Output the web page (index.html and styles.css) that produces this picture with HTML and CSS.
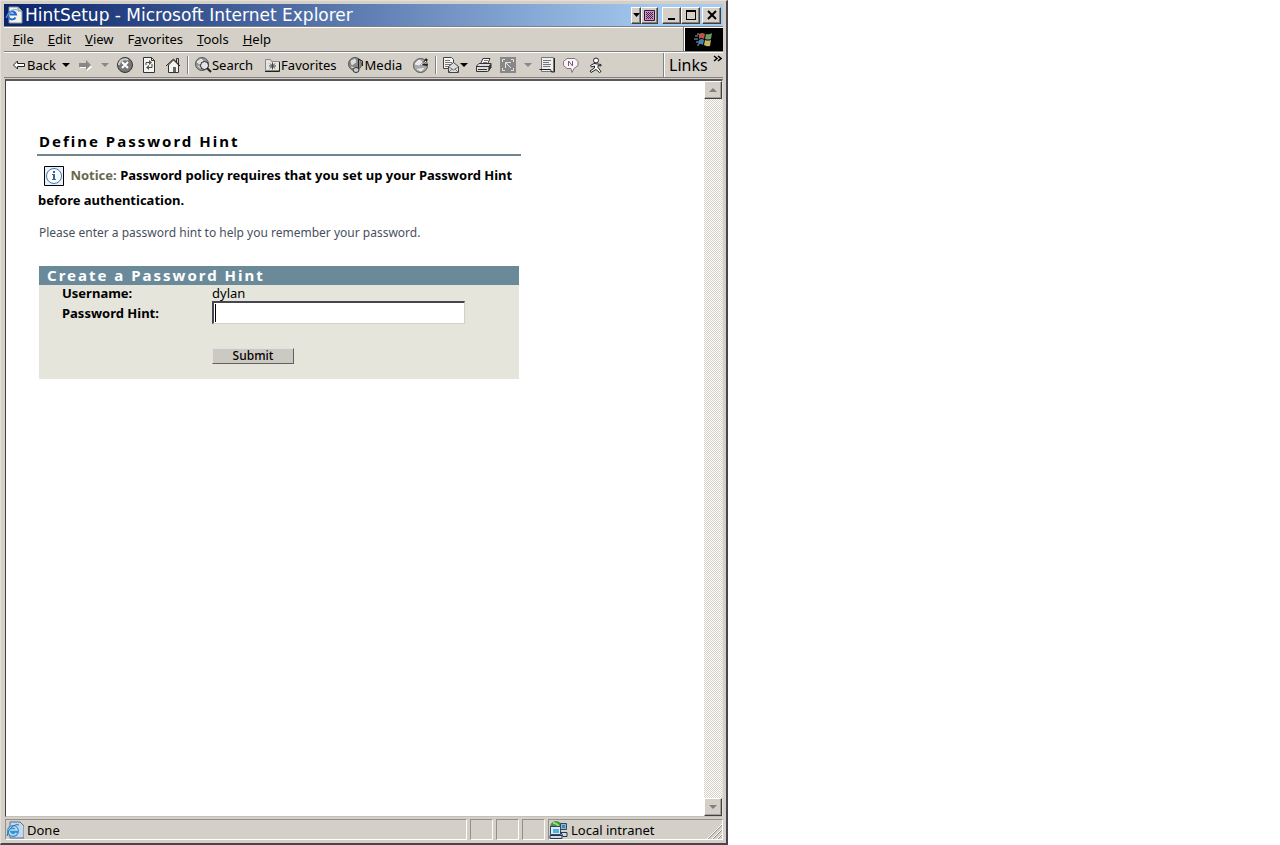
FILE: index.html
```html
<!DOCTYPE html>
<html lang="en">
<head>
  <meta charset="UTF-8">
  <title>HintSetup</title>
  <link rel="stylesheet" href="styles.css">
</head>
<body>

<div class="window">

  <header class="titlebar">
    <svg class="icon" width="18" height="18" viewBox="0 0 18 18">
      <path d="M4 1h9l4 4v12H4z" fill="#f4f4ec" stroke="#8a8f98"/>
      <path d="M13 1v4h4" fill="#d0d0c8" stroke="#8a8f98"/>
      <path d="M10.500 11.500A4 4 0 1 1 11 8.500H5" fill="none" stroke="#2468d0" stroke-width="2"/>
      <path d="M1 12C3 6 9 2 12 4" fill="none" stroke="#68a8f0"/>
    </svg>
    <h1 class="title">HintSetup - Microsoft Internet Explorer</h1>
    <button class="win-btn drop" aria-label="Options"><svg width="7" height="4"><path d="M0 0h7L3.500 4z"/></svg></button>
    <button class="win-btn theme" aria-label="Theme">
      <svg width="11" height="11" viewBox="0 0 11 11">
        <path d="M.5.5h10v10H.5z" fill="#d090c8" stroke="#301838"/>
        <path d="M2 2.500h1M4 2.500h1M6 2.500h1M8 2.500h1M3 3.500h1M5 3.500h1M7 3.500h1M2 4.500h1M4 4.500h1M6 4.500h1M8 4.500h1M3 5.500h1M5 5.500h1M7 5.500h1M2 6.500h1M4 6.500h1M6 6.500h1M8 6.500h1M3 7.500h1M5 7.500h1M7 7.500h1M2 8.500h1M4 8.500h1M6 8.500h1M8 8.500h1" stroke="#402048"/>
      </svg>
    </button>
    <button class="win-btn min" aria-label="Minimize"><svg width="12" height="12"><path d="M2 9h7v2H2z"/></svg></button>
    <button class="win-btn" aria-label="Maximize"><svg width="12" height="12"><path d="M1 1h10v10H1zM2 3v7h8V3z" fill-rule="evenodd"/></svg></button>
    <button class="win-btn close" aria-label="Close"><svg width="12" height="12"><path d="M2 2l8 8M10 2l-8 8" stroke="#000" stroke-width="2"/></svg></button>
  </header>

  <div class="menurow">
    <nav class="menu">
      <button><u>F</u>ile</button>
      <button><u>E</u>dit</button>
      <button><u>V</u>iew</button>
      <button>F<u>a</u>vorites</button>
      <button><u>T</u>ools</button>
      <button><u>H</u>elp</button>
    </nav>
    <div class="throbber">
      <svg width="20" height="18" viewBox="0 0 20 18">
        <path d="M1 5h3M0 8h4M2 11h3M3 3h2M3 14h2" stroke="#425866" stroke-width="2"/>
        <path d="M5 3q3-2 6 0l-1 5q-3-2-5 0z" fill="#b85840"/>
        <path d="M12 3q3 1 6-1l-1 6q-3 1-6 0z" fill="#6c9a68"/>
        <path d="M5 9q3-2 5 0l-1 5q-2-2-5 0z" fill="#4a80b0"/>
        <path d="M11 9q3 1 6 0l-1 6q-3 1-6-1z" fill="#c8b468"/>
      </svg>
    </div>
  </div>

  <div class="toolbar">
    <div class="tools">
      <button class="tool back">
        <svg width="15" height="16" viewBox="0 0 15 16"><path d="M1.500 8L5.500 4v2.500h7v3h-7V12z" fill="#fff" stroke="#222"/></svg>
        <span>Back</span>
      </button>
      <button class="caret" aria-label="Back list"><svg width="8" height="4"><path d="M0 0h8L4 4z"/></svg></button>
      <button class="tool" aria-label="Forward"><svg width="16" height="16"><path d="M2 8h7V5l5 5-5 4v-3H2z" fill="#fff"/><path d="M1 6h7V3l5 5-5 5v-3H1z" fill="#888"/></svg></button>
      <button class="caret off" aria-label="Forward list"><svg width="8" height="4"><path d="M0 0h8L4 4z"/></svg></button>
      <button class="tool" aria-label="Stop">
        <svg width="16" height="16"><circle cx="8" cy="8" r="7.500" fill="#777" stroke="#333"/><path d="M2 8a6 6 0 0 1 9-5" fill="none" stroke="#ccc" stroke-width="2"/><path d="M5 5l6 6M11 5l-6 6" stroke="#fff" stroke-width="2"/></svg>
      </button>
      <button class="tool" aria-label="Refresh">
        <svg width="16" height="16"><path d="M2.500.5h8l3 3v12h-11z" fill="#f4f4f0" stroke="#333"/><path d="M10.500.5v3h3" fill="none" stroke="#333"/><path d="M5 8V5.500h4M11 7v3.500H7" fill="none" stroke="#444"/><path d="M8 3l3 2.500L8 8zM8 8l-3 2.500L8 13z" fill="#555"/></svg>
      </button>
      <button class="tool" aria-label="Home">
        <svg width="16" height="16"><path d="M11.500 5V1.500h2V8" fill="#ccc" stroke="#333"/><path d="M3.500 8v7.500h10V8l-5-5z" fill="#f4f4f0" stroke="#333"/><path d="M1 9l7.500-7L15 9" fill="none" stroke="#222"/><path d="M8 10h3v5H8z" fill="#666"/></svg>
      </button>
      <span class="sep"></span>
      <button class="tool label">
        <svg width="17" height="16"><circle cx="7" cy="7" r="6.500" fill="#999" stroke="#555"/><path d="M2 5l4-3 2 2-3 3zM3 9l3 2" fill="#ddd" stroke="#eee"/><circle cx="9.500" cy="8.500" r="4" fill="#e4e4e4" stroke="#222"/><path d="M12 11l4 4" stroke="#222" stroke-width="2"/></svg>
        <span>Search</span>
      </button>
      <button class="tool label">
        <svg width="17" height="16"><path d="M1.500 13.500v-11h5l1 2h8v9z" fill="#e4e4e0" stroke="#888"/><path d="M1 14.500h14.500V5" fill="none" stroke="#222"/><path d="M5 9h7M8.500 5.500v7M6 6.500l5 5M11 6.500l-5 5" stroke="#444"/></svg>
        <span>Favorites</span>
      </button>
      <button class="tool label">
        <svg width="17" height="16"><circle cx="7" cy="7" r="6.500" fill="#888" stroke="#555"/><path d="M3 4l4-2 1 3-4 3zM3 10l4 1" fill="#ddd" stroke="#ddd"/><path d="M10.500 12V2l4 2v5" fill="none" stroke="#222"/><ellipse cx="8" cy="13" rx="3" ry="2.500" fill="#ccc" stroke="#333"/></svg>
        <span>Media</span>
      </button>
      <button class="tool" aria-label="History">
        <svg width="16" height="16"><circle cx="7.500" cy="8.500" r="7" fill="#aaa" stroke="#555"/><path d="M2 7l4-4 3 2-3 3zM4 12l4 2 3-3" fill="#e8e8e8" stroke="#eee"/><path d="M8 8l5-7 2 2-4 4h4l-1 2z" fill="#222"/><path d="M8 8l5-4" stroke="#fff"/></svg>
      </button>
      <span class="sep"></span>
      <button class="tool" aria-label="Mail">
        <svg width="25" height="16"><path d="M.5.5h8l2 2v9H.5z" fill="#f4f4f0" stroke="#444"/><path d="M2 3.500h5M2 5.500h7M2 7.500h6M2 9.500h4" stroke="#777"/><path d="M5.500 9.500l5-4 5 4v6h-10z" fill="#ddd" stroke="#444"/><path d="M6 10l4.500 3L15 10M6 15l3-3M15 15l-3-3" fill="none" stroke="#777"/><path d="M17 6h8l-4 4z"/></svg>
      </button>
      <button class="tool" aria-label="Print">
        <svg width="16" height="16"><path d="M4.500 7L7 1.500h7L11.500 7" fill="#fff" stroke="#333"/><path d="M8 3.500h4M7 5.500h4" stroke="#777"/><path d="M.5 9L3 6.500h12l-2 3v4l-1.500 1H.5z" fill="#ddd" stroke="#333"/><path d="M13 9.500l2.500-3v4l-3 4z" fill="#333"/><path d="M1 9.500h12M2 12.500h9" stroke="#333"/></svg>
      </button>
      <button class="tool" aria-label="Edit">
        <svg width="16" height="16"><path d="M0 0h16v16H0z" fill="#888"/><path d="M2.500 5V2.500H5M11 2.500h2.500V5M13.500 11v2.500H11M5 13.500H2.500V11M5.500 11V5.500H11M6 6l5 5" fill="none" stroke="#e4e4dc"/></svg>
      </button>
      <button class="caret off" aria-label="Edit list"><svg width="8" height="4"><path d="M0 0h8L4 4z"/></svg></button>
      <button class="tool" aria-label="Discuss">
        <svg width="16" height="16"><path d="M2.500.5h12v14h-12z" fill="#eee" stroke="#777"/><path d="M4 3.500h8M4 5.500h6M4 7.500h8M4 9.500h7" stroke="#777"/><path d="M.5 12.500h11l1 2.500h3V1" fill="none" stroke="#222"/></svg>
      </button>
      <button class="tool" aria-label="Messenger">
        <svg width="16" height="16"><path d="M4 1.500h8l3 3v4l-4 3-2 4-1-4H4l-3.500-3v-4z" fill="#f8f4f8" stroke="#907088"/><path d="M5.500 9V4l4 5V4" fill="none" stroke="#666"/></svg>
      </button>
      <button class="tool" aria-label="AIM">
        <svg width="16" height="16"><circle cx="9" cy="3.500" r="2.500" fill="#fff" stroke="#222"/><path d="M7 6.500L3.500 8.500l1 1.500 3-1v2l-4.500 3 1 1.500L9 12.500l3.500 3 1.500-1-3-4v-2l3 .5V7.500z" fill="#fff" stroke="#222"/></svg>
      </button>
    </div>
    <button class="links">Links
      <svg width="9" height="8"><path d="M1 1l3 2.500L1 6M5 1l3 2.500L5 6" fill="none" stroke="#000" stroke-width="1.500"/></svg>
    </button>
  </div>

  <div class="view">
    <main class="page">
      <h2 class="page-title">Define Password Hint</h2>
      <p class="notice">
        <svg class="info" width="20" height="20" viewBox="0 0 20 20">
          <path d="M.5.5h19v19H.5z" fill="#e8f0f8" stroke="#000"/>
          <circle cx="10" cy="10" r="7.500" fill="#fff" stroke="#3c78b4"/>
          <path d="M9 5h2v2H9zM8 8h3v5h1v1H8v-1h1V9H8z" fill="#2868a8"/>
        </svg>
        <span class="tag">Notice:</span> Password policy requires that you set up your Password Hint before authentication.
      </p>
      <p class="intro">Please enter a password hint to help you remember your password.</p>

      <form class="hint-form">
        <h3>Create a Password Hint</h3>
        <div class="fields">
          <span class="name">Username:</span>
          <span class="value">dylan</span>
          <label class="name" for="hint">Password Hint:</label>
          <input type="text" id="hint">
          <button type="submit">Submit</button>
        </div>
      </form>
    </main>
    <div class="scrollbar">
      <button aria-label="Scroll up"><svg width="8" height="4"><path d="M0 4h8L4 0z"/></svg></button>
      <button aria-label="Scroll down"><svg width="8" height="4"><path d="M0 0h8L4 4z"/></svg></button>
    </div>
  </div>

  <footer class="status">
    <div class="pane message">
      <svg width="18" height="18" viewBox="0 0 18 18">
        <path d="M4 1h10l4 4v12H4z" fill="#c4d8ec" stroke="#606c90"/>
        <circle cx="7" cy="10" r="6" fill="#3c90cc"/>
        <path d="M10.500 12A4 4 0 1 1 11 9H4" fill="none" stroke="#b8e0f8" stroke-width="1.500"/>
        <path d="M1 15C2 8 9 2 13 4" fill="none" stroke="#206ca8"/>
      </svg>
      <span>Done</span>
    </div>
    <div class="pane slot"></div>
    <div class="pane slot"></div>
    <div class="pane slot"></div>
    <div class="pane zone">
      <svg width="19" height="18" viewBox="0 0 19 18">
        <circle cx="7" cy="6" r="6" fill="#48904c"/>
        <path d="M4 2q4 0 6 4" fill="none" stroke="#a0dc70" stroke-width="2"/>
        <path d="M1.500 5.500h10v8h-10z" fill="#e0e8f0" stroke="#28486c"/>
        <path d="M4 8h6v4H4z" fill="#50b0e0"/>
        <path d="M11.500 2.500h6v6h-6z" fill="#94b4cc" stroke="#28486c"/>
        <path d="M13 4h3v3h-3z" fill="#3888b8"/>
        <path d="M1 14.500h12v3H1zM12 11.500h6v4h-4z" fill="#d0d8e0" stroke="#28384c"/>
      </svg>
      <span>Local intranet</span>
      <svg class="grip" width="15" height="15"><path d="M1 15L15 1M6 15l9-9M11 15l4-4" stroke="#909090"/><path d="M0 15L15 0M5 15l10-10M10 15l5-5" stroke="#fff"/></svg>
    </div>
  </footer>

</div>

</body>
</html>
```
FILE: styles.css
```css
* {
  box-sizing: border-box;
}
body {
  margin: 0;
  background: #fff;
  color: #000;
  font: 13px/16px "Noto Sans", "Open Sans", sans-serif;
}
button {
  margin: 0;
  padding: 0;
  border: 0;
  background: none;
  color: inherit;
  font: inherit;
}
svg {
  display: block;
  flex: none;
}

/* window frame */
.window {
  display: flex;
  flex-direction: column;
  max-width: 728px;
  height: 100vh;
  padding: 3px;
  background: #d4d0c8;
  border: 1px solid #e4e0d8;
  border-right: 2px solid #484450;
  border-bottom: 2px solid #484450;
}
.titlebar {
  display: flex;
  align-items: center;
  height: 22px;
  padding: 0 2px 0 1px;
  background: linear-gradient(to right, #0a246a, #a6caf0 92%);
  color: #fff;
}
.title {
  flex: 1;
  margin: 0 0 0 2px;
  font: 17px/22px "DejaVu Sans", sans-serif;
  white-space: nowrap;
}
.win-btn {
  display: flex;
  align-items: center;
  justify-content: center;
  width: 19px;
  height: 17px;
  background: #d4d0c8;
  border: 1px solid #fff;
  border-right-color: #404040;
  border-bottom-color: #404040;
  box-shadow: inset -1px -1px #808080;
}
.drop {
  width: 10px;
}
.theme {
  width: 17px;
}
.min {
  margin-left: 4px;
}
.close {
  margin-left: 2px;
}

/* menu and toolbar */
.menurow {
  display: flex;
  height: 26px;
  border-top: 1px solid #808080;
  border-bottom: 1px solid #808080;
  box-shadow: inset 0 1px #fff;
}
.menu {
  display: flex;
  flex: 1;
  gap: 14px;
  padding-left: 9px;
  border-right: 1px solid #808080;
}
.throbber {
  display: flex;
  align-items: center;
  justify-content: center;
  width: 39px;
  margin-top: 1px;
  background: #000;
  border-left: 1px solid #fff;
}
.toolbar {
  display: flex;
  height: 26px;
  border-top: 1px solid #fff;
  border-bottom: 1px solid #808080;
}
.tools {
  display: flex;
  flex: 1;
  align-items: center;
  padding-left: 4px;
  border-right: 1px solid #808080;
}
.tool {
  display: flex;
  align-items: center;
  padding: 0 4px;
}
.back {
  padding-right: 3px;
}
.label {
  padding-right: 7px;
}
.caret {
  display: flex;
  justify-content: center;
  width: 15px;
}
.off svg {
  fill: #888;
}
.sep {
  width: 2px;
  height: 18px;
  margin: 0 2px;
  border-left: 1px solid #808080;
  border-right: 1px solid #fff;
}
.links {
  display: flex;
  gap: 5px;
  width: 59px;
  padding: 2px 0 0 4px;
  border-left: 1px solid #fff;
  font-size: 16px;
  line-height: 20px;
}

/* browser view */
.view {
  display: flex;
  flex: 1;
  min-height: 0;
  margin: 1px 0 0 1px;
  background: #fff;
  border: 1px solid #404040;
  border-top: 2px solid #5c585c;
  border-right-color: #e4e0d8;
  border-bottom-color: #c4c0b8;
}
.scrollbar {
  display: flex;
  flex-direction: column;
  justify-content: space-between;
  width: 18px;
  background: repeating-conic-gradient(#d4d0c8 0 25%, #fff 0 50%) 0 0 / 2px 2px;
}
.scrollbar button {
  display: flex;
  align-items: center;
  justify-content: center;
  height: 18px;
  background: #d4d0c8;
  border: 1px solid #fff;
  border-right-color: #404040;
  border-bottom-color: #404040;
  box-shadow: inset -1px -1px #a0a0a0;
}
.scrollbar svg {
  fill: #808080;
}
.page {
  flex: 1;
  padding: 49px 31px;
}
.page-title {
  max-width: 484px;
  margin: 0;
  padding: 0 0 2px 2px;
  border-bottom: 2px solid #70868f;
  font-size: 15px;
  line-height: 22px;
  letter-spacing: 2px;
}
.notice {
  max-width: 484px;
  margin: 7px 0 0 1px;
  font-weight: bold;
  line-height: 25px;
}
.info {
  display: inline-block;
  margin: 0 3px 0 6px;
  vertical-align: middle;
}
.tag {
  color: #68684c;
}
.intro {
  margin: 12px 0 0 2px;
  color: #485060;
  font-size: 12px;
}

/* hint form */
.hint-form {
  max-width: 480px;
  margin: 25px 0 0 2px;
  background: #e5e5dc;
}
.hint-form h3 {
  margin: 0;
  padding-left: 8px;
  background: #6a8a9a;
  color: #fff;
  font-size: 15px;
  line-height: 19px;
  letter-spacing: 2px;
}
.fields {
  display: grid;
  grid-template-columns: 150px 253px;
  grid-template-rows: 16px 23px;
  align-items: center;
  padding: 0 0 15px 23px;
}
.name {
  font-weight: bold;
}
/* the gradient draws the text cursor */
.fields input {
  height: 23px;
  padding: 0 2px;
  border: 1px solid #d4d0c8;
  border-top: 2px solid #484450;
  border-left: 2px solid #484450;
  outline: 0;
  background: #fff linear-gradient(#000, #000) 1px 1px / 1px 18px no-repeat;
  font: inherit;
}
.fields input:focus {
  background-image: none;
}
.fields button {
  grid-column: 2;
  width: 82px;
  height: 16px;
  margin-top: 24px;
  background: #ccc9c2;
  border: 1px solid #e4e0e4;
  border-right-color: #606060;
  border-bottom-color: #606060;
  font-size: 12px;
  font-weight: 500;
  line-height: 14px;
}

/* status bar */
.status {
  display: flex;
  gap: 3px;
  height: 23px;
  padding: 2px 0 0 1px;
}
.pane {
  display: flex;
  align-items: center;
  gap: 3px;
  border: 1px solid #909090;
  border-right-color: #fff;
  border-bottom-color: #fff;
}
.message {
  flex: 1;
}
.slot {
  width: 23px;
}
.zone {
  width: 175px;
}
.grip {
  align-self: flex-end;
  margin-left: auto;
}
```
